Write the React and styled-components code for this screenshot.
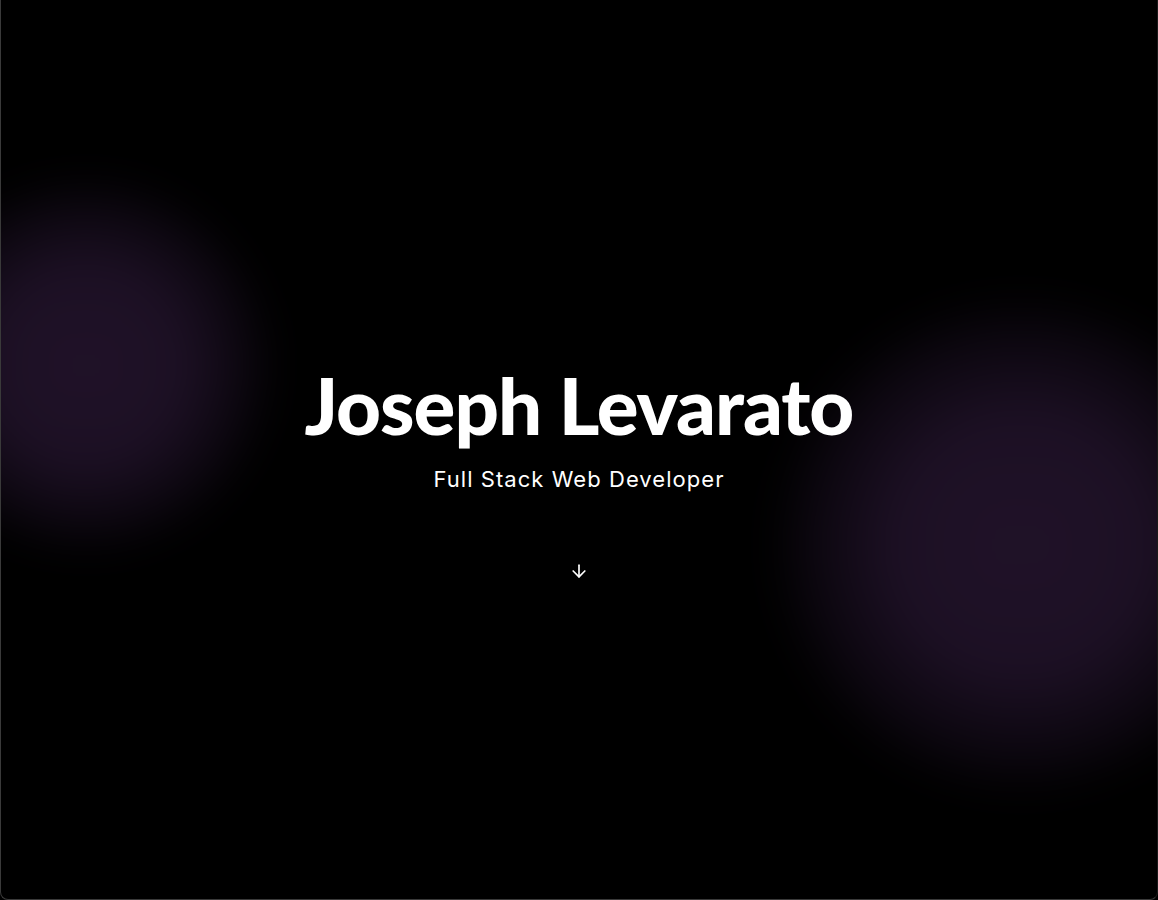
import React from "react";
import styled, { createGlobalStyle } from "styled-components";
import { ArrowDown } from "lucide-react";

const Global = createGlobalStyle`
  html, body { margin: 0; padding: 0; background: #000; }
  * { box-sizing: border-box; }
`;

const Frame = styled.main`
  position: relative;
  width: 1158px;
  height: 900px;
  overflow: hidden;
  background: #000;
  border: 1px solid #3a3a3a;
  border-top: none;
  border-right-color: #1a1a1a;
  border-radius: 0 0 8px 8px;
  display: flex;
  flex-direction: column;
  align-items: center;
  justify-content: center;
  padding-top: 48px;
`;

const Glow = styled.div`
  position: absolute;
  border-radius: 50%;
  pointer-events: none;
  background: radial-gradient(circle, rgba(32, 18, 40, 1) 0%, rgba(30, 17, 38, 0.95) 35%, rgba(25, 14, 32, 0.5) 58%, rgba(0, 0, 0, 0) 72%);
  filter: blur(18px);
  width: ${(p) => p.$size}px;
  height: ${(p) => p.$size}px;
  left: ${(p) => p.$x - p.$size / 2}px;
  top: ${(p) => p.$y - p.$size / 2}px;
`;

const Title = styled.h1`
  position: relative;
  margin: 0;
  font-family: Lato, Inter, sans-serif;
  font-weight: 900;
  font-size: 78px;
  letter-spacing: -1px;
  line-height: 1;
  color: #fff;
`;

const Subtitle = styled.p`
  position: relative;
  margin: 22px 0 0;
  font-family: Inter, "Liberation Sans", sans-serif;
  font-weight: 400;
  font-size: 22px;
  letter-spacing: 1.05px;
  color: #fff;
`;

const ScrollHint = styled.div`
  position: relative;
  margin-top: 69px;
  color: #fff;
  display: flex;
`;

export default function App() {
  return (
    <>
      <Global />
      <Frame>
        <Glow $x={85} $y={365} $size={380} />
        <Glow $x={1020} $y={545} $size={500} />
        <Title>Joseph Levarato</Title>
        <Subtitle>Full Stack Web Developer</Subtitle>
        <ScrollHint>
          <ArrowDown size={20} strokeWidth={2} />
        </ScrollHint>
      </Frame>
    </>
  );
}
